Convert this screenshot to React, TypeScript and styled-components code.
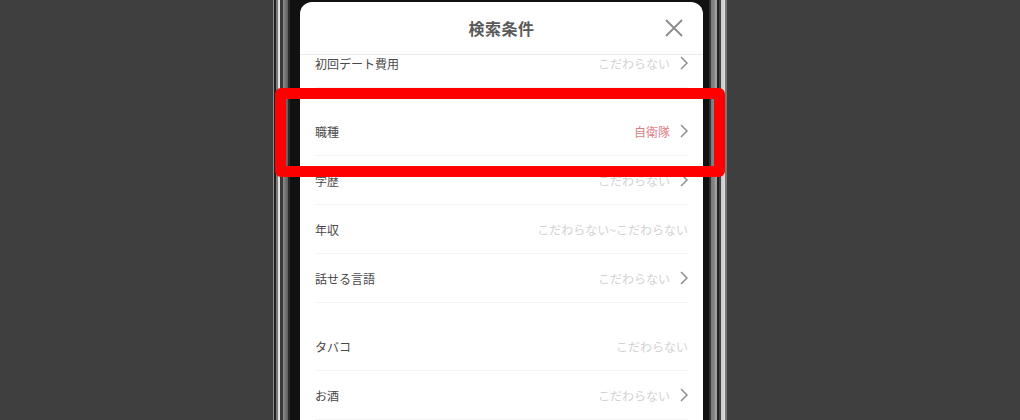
import React from 'react';
import styled, { createGlobalStyle } from 'styled-components';

const GlobalStyle = createGlobalStyle`
  html, body {
    margin: 0;
    padding: 0;
    background: #3f3f3f;
  }
  body {
    font-family: "Noto Sans CJK JP", "Noto Sans", sans-serif;
  }
`;

interface RowItem {
  label: string;
  value: string;
  chevron?: boolean;
  highlight?: boolean;
}

const sections: RowItem[][] = [
  [{ label: '初回デート費用', value: 'こだわらない', chevron: true }],
  [
    { label: '職種', value: '自衛隊', chevron: true, highlight: true },
    { label: '学歴', value: 'こだわらない', chevron: true },
    { label: '年収', value: 'こだわらない~こだわらない' },
    { label: '話せる言語', value: 'こだわらない', chevron: true },
  ],
  [
    { label: 'タバコ', value: 'こだわらない' },
    { label: 'お酒', value: 'こだわらない', chevron: true },
  ],
];

const Page = styled.div`
  position: relative;
  width: 1020px;
  height: 420px;
  overflow: hidden;
  background: #3f3f3f;
  padding-left: 273px;
  box-sizing: border-box;
`;

const Phone = styled.div`
  width: 454px;
  height: 420px;
  box-sizing: border-box;
  padding: 0 24px 0 27px;
  display: flex;
  background: linear-gradient(
    to right,
    #8a8a8a 0px, #8a8a8a 1px,
    #222 1px, #222 3px,
    #7a7a7a 3px, #7a7a7a 5px,
    #e2e2e2 5px, #e2e2e2 7px,
    #3a3a3a 7px, #3a3a3a 10px,
    #8c8c8c 10px, #5a5a5a 15px,
    #2a2a2a 15px, #2a2a2a 17px,
    #111 17px, #111 436px,
    #333 436px, #333 438px,
    #7a7a7a 438px, #8a8a8a 442px,
    #a0a0a0 442px, #a0a0a0 444px,
    #222 444px, #222 446px,
    #444 446px, #444 448px,
    #c8c8c8 448px, #dcdcdc 452px,
    #777 452px, #777 454px
  );
`;

const Screen = styled.div`
  flex: 1;
  background: #111;
  padding-top: 2px;
  display: flex;
  flex-direction: column;
`;

const Modal = styled.div`
  flex: 1;
  background: #fff;
  border-radius: 12px 12px 0 0;
  display: flex;
  flex-direction: column;
  overflow: hidden;
`;

const Header = styled.div`
  height: 52px;
  flex: none;
  display: grid;
  grid-template-columns: 1fr auto 1fr;
  align-items: center;
  border-bottom: 1px solid #e9e9e9;
  padding-right: 20px;
  padding-left: 20px;
`;

const Title = styled.div`
  grid-column: 2;
  font-size: 16px;
  font-weight: bold;
  color: #595959;
  letter-spacing: 0.5px;
`;

const CloseButton = styled.div`
  justify-self: end;
  width: 18px;
  height: 18px;
  display: flex;
`;

const List = styled.div`
  flex: 1;
  overflow: hidden;
`;

const ListInner = styled.div`
  margin-top: -16px;
  display: flex;
  flex-direction: column;
  gap: 19px;
`;

const Section = styled.div`
  padding: 0 15px;
`;

const Row = styled.div`
  height: 48px;
  border-bottom: 1px solid #f3f3f3;
  display: flex;
  align-items: center;
  justify-content: space-between;
`;

const Label = styled.span`
  font-size: 12px;
  color: #484848;
`;

const ValueWrap = styled.span`
  display: flex;
  align-items: center;
  gap: 10px;
`;

const Value = styled.span<{ $highlight?: boolean }>`
  font-size: 12px;
  color: ${({ $highlight }) => ($highlight ? '#dc7e86' : '#d2d2d2')};
`;

const Annotation = styled.div`
  position: absolute;
  left: 275px;
  top: 88px;
  width: 450px;
  height: 89px;
  box-sizing: border-box;
  border: 11px solid #ff0000;
  border-radius: 6px;
  pointer-events: none;
`;

const Chevron = () => (
  <svg width="8" height="14" viewBox="0 0 8 14">
    <path d="M1 1 L7 7 L1 13" fill="none" stroke="#8d8d8d" strokeWidth="1.5" />
  </svg>
);

const CloseIcon = () => (
  <svg width="18" height="18" viewBox="0 0 18 18">
    <path d="M1 1 L17 17 M17 1 L1 17" fill="none" stroke="#8a8a8a" strokeWidth="1.8" />
  </svg>
);

export default function App() {
  return (
    <>
      <GlobalStyle />
      <Page>
        <Phone>
          <Screen>
            <Modal>
              <Header>
                <Title>検索条件</Title>
                <CloseButton>
                  <CloseIcon />
                </CloseButton>
              </Header>
              <List>
                <ListInner>
                  {sections.map((rows, i) => (
                    <Section key={i}>
                      {rows.map((row) => (
                        <Row key={row.label}>
                          <Label>{row.label}</Label>
                          <ValueWrap>
                            <Value $highlight={row.highlight}>{row.value}</Value>
                            {row.chevron && <Chevron />}
                          </ValueWrap>
                        </Row>
                      ))}
                    </Section>
                  ))}
                </ListInner>
              </List>
            </Modal>
          </Screen>
        </Phone>
        <Annotation />
      </Page>
    </>
  );
}
